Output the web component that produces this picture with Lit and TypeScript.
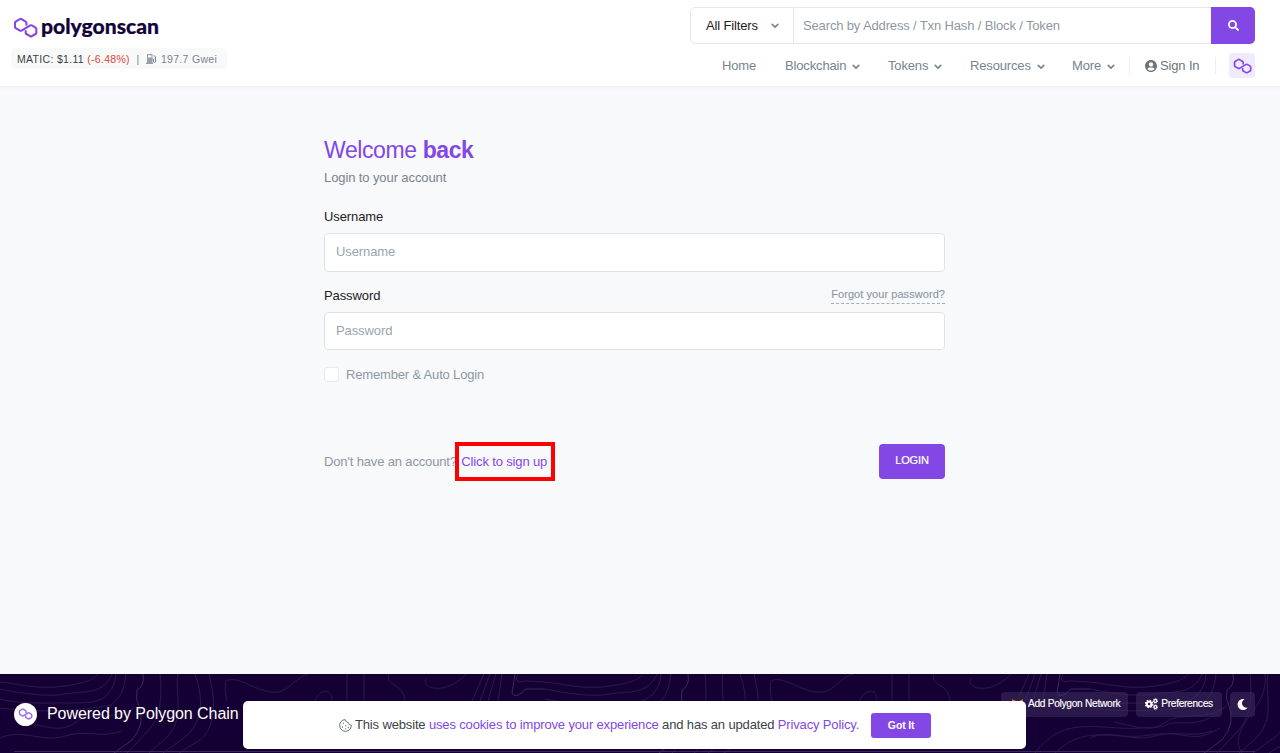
import { LitElement, html, css, svg } from "lit";
import { customElement } from "lit/decorators.js";

const chain = (cls: string, width: number) => html`
  <svg class=${cls} viewBox="13 17 25 21" fill="none" stroke="currentColor" stroke-width=${width} stroke-linejoin="round">
    <path d="M26.4 25.6V22.8Q26.4 22 25.700 21.600L21.500 19.100Q20.700 18.700 19.900 19.100L15.700 21.600Q15 22 15 22.800V27Q15 27.800 15.700 28.200L19.900 30.600Q20.700 31 21.500 30.600L30.200 25.400Q31 25 31.800 25.400L35.600 27.700Q36.300 28.100 36.300 28.900V32.900Q36.300 33.600 35.600 34L31.800 36.200Q31 36.600 30.200 36.200L26.400 34Q25.700 33.600 25.700 32.900V30.200"/>
  </svg>`;

const caret = html`<svg class="caret" viewBox="0 0 8 6" fill="none" stroke="currentColor" stroke-width="1.600" stroke-linecap="round" stroke-linejoin="round"><path d="M1.200 1.400L4 4.100L6.800 1.400"/></svg>`;

const gear = (cx: number, cy: number, r: number) => svg`
  <circle cx=${cx} cy=${cy} r=${r * 0.58} fill="none" stroke="currentColor" stroke-width=${r * 0.52}/>
  <circle cx=${cx} cy=${cy} r=${r * 0.9} fill="none" stroke="currentColor" stroke-width=${r * 0.34} stroke-dasharray=${`${r * 0.4} ${r * 0.3069}`}/>`;

@customElement("app-root")
export class AppRoot extends LitElement {
  static styles = css`
    :host { display: block; height: 753px; overflow: hidden; position: relative; background: #f8f9fb; font: 13px/20px "Liberation Sans", Arial, sans-serif; letter-spacing: -.15px; color: #77838f; }
    * { box-sizing: border-box; }
    svg { display: block; flex: none; }
    a { color: #8247e5; text-decoration: none; }
    .header { height: 87px; background: #fff; border-bottom: 1px solid #f1f2f5; box-shadow: 0 1px 2px #f0f2f6; display: flex; justify-content: space-between; padding: 7px 25px 0 11px; }
    .brand { padding: 9px 0 0 2px; height: 41px; display: flex; }
    .mark { width: 25px; height: 21px; margin-top: 1px; color: #8247e5; }
    .wordmark { width: 126px; height: 32px; margin-left: 2px; font: 900 20.5px Lato, sans-serif; letter-spacing: 0; fill: #14033a; stroke: #14033a; stroke-width: .2px; overflow: visible; }
    .price { height: 21px; width: 216px; border-radius: 4px; background: #f8fafa; padding: 0 6px; display: flex; align-items: center; font-size: 10.5px; letter-spacing: .31px; white-space: pre; color: #77838f; }
    .dark { color: #3b4046; } .red { color: #de4437; }
    .pump { width: 11px; height: 10px; margin-right: 4px; }
    .right { width: 565px; }
    .search { display: flex; height: 37px; }
    .filter { width: 104px; border: 1px solid #e4e7ee; border-radius: 5px 0 0 5px; padding: 0 14px 0 15px; display: flex; align-items: center; justify-content: space-between; color: #1e2022; }
    .filter .caret { margin: 1px 0 0; color: #77838f; }
    .query { flex: 1; border: solid #e4e7ee; border-width: 1px 0; padding: 0 9px; display: flex; align-items: center; color: #8c98a4; letter-spacing: -.145px; }
    .go { width: 44px; border-radius: 0 5px 5px 0; background: #8247e5; color: #fff; display: grid; place-items: center; }
    .go svg { width: 11px; height: 11px; }
    .nav { display: grid; grid-template-columns: 63px 103px 82px 102px 58px 85px 14px 26px; padding-left: 32px; height: 26px; margin-top: 9px; align-items: center; }
    .item { display: flex; align-items: center; gap: 6px; white-space: nowrap; }
    .caret { width: 8px; height: 6px; margin-top: 2px; }
    .sign { border: solid #eceef2; border-width: 0 1px; height: 18px; padding-left: 15px; display: flex; align-items: center; gap: 3px; color: #6c757d; margin-left: -1px; white-space: nowrap; width: 87px; }
    .sign svg { width: 12px; height: 12px; }
    .net { grid-column: 8; width: 26px; height: 25px; margin-top: -1px; background: #f0eafc; border-radius: 4px; display: grid; place-items: center; color: #8247e5; }
    .small { width: 19px; height: 16px; }
    .main { width: 621px; margin-left: 324px; height: 587px; padding-top: 49px; }
    .title { margin: 0; font-size: 23px; font-weight: 400; line-height: 28px; color: #8247e5; letter-spacing: -.4px; }
    .sub { margin: 4px 0 0; height: 20px; letter-spacing: -.1px; }
    .label { display: flex; justify-content: space-between; height: 20px; color: #1e2022; letter-spacing: -.1px; }
    .first { margin-top: 19px; margin-bottom: 6px; }
    .second { margin-top: 14px; margin-bottom: 6px; }
    .forgot { color: #8c98a4; font-size: 11px; line-height: 17px; height: 18px; border-bottom: 1px dashed #a3adb7; letter-spacing: .06px; -webkit-text-stroke: .12px; }
    .input { height: 39px; background: #fff; border: 1px solid #dfe3e9; border-radius: 4px; padding: 0 11px 2px; display: flex; align-items: center; color: #97a4af; letter-spacing: -.1px; }
    .pass { height: 38px; padding-bottom: 0; }
    .remember { display: flex; gap: 7px; align-items: center; margin-top: 15px; height: 20px; color: #8c98a4; letter-spacing: -.17px; }
    .box { width: 15px; height: 15px; margin-top: -1px; background: #fff; border: 1px solid #e7eaf3; border-radius: 3px; }
    .actions { margin-top: 59px; height: 35px; display: flex; justify-content: space-between; align-items: center; color: #8c98a4; }
    .signup { position: relative; margin-left: 1px; letter-spacing: -.15px; }
    .outline { position: absolute; left: -6px; top: -12px; width: 100px; height: 39px; border: 4px solid #f00; }
    .login { width: 66px; height: 35px; border-radius: 4px; background: #8247e5; color: #fff; display: grid; place-items: center; font-size: 11px; padding-bottom: 3px; -webkit-text-stroke: .2px; }
    .footer { height: 79px; background: #150035; color: #fff; position: relative; }
    .topo { position: absolute; inset: 0; width: 1280px; height: 79px; }
    .bar { position: relative; height: 78px; margin: 0 25px 0 14px; display: flex; border-bottom: 1px solid #392755; }
    .powered { display: flex; align-items: center; gap: 10px; font-size: 16px; height: 24px; margin-top: 28px; white-space: nowrap; letter-spacing: -.06px; }
    .disc { width: 23px; height: 23px; border-radius: 50%; background: #fff; color: #9b6df0; display: grid; place-items: center; }
    .tiny { width: 15px; height: 12px; }
    .tools { margin: 18px 0 0 auto; display: flex; gap: 8px; font-size: 10.2px; letter-spacing: -.3px; -webkit-text-stroke: .15px; }
    .tool { height: 25px; border-radius: 4px; background: rgba(64, 45, 92, .55); display: flex; align-items: center; justify-content: center; white-space: nowrap; padding-bottom: 1px; }
    .add { width: 127px; justify-content: flex-start; padding-left: 11px; gap: 5px; }
    .fox { width: 11px; height: 10px; }
    .pref { width: 86px; gap: 3px; }
    .cogs { width: 13px; height: 12px; }
    .night { width: 25px; } .night svg { width: 11px; height: 11px; }
    .cookie { position: absolute; left: 243px; top: 701px; width: 783px; height: 48px; border-radius: 5px; background: #fff; color: #3c4248; display: flex; align-items: center; padding-left: 96px; white-space: pre; letter-spacing: -.15px; }
    .biscuit { width: 13px; height: 13px; margin-right: 3px; color: #6c757d; }
    .got { margin-left: 12px; width: 60px; height: 25px; border-radius: 3px; background: #8247e5; color: #fff; font-size: 10.5px; font-weight: 700; display: grid; place-items: center; padding-bottom: 1px; }
  `;

  render() {
    return html`
      <header class="header">
        <div>
          <div class="brand">${chain("mark", 2.1)}
            <svg class="wordmark"><text x="1" y="18" textLength="118" lengthAdjust="spacingAndGlyphs">polygonscan</text></svg>
          </div>
          <div class="price"><span class="dark">MATIC: $1.11 </span><span class="red">(-6.48%)</span><span>  |  </span><svg class="pump" viewBox="0 0 11 10"><path fill="currentColor" opacity=".75" fill-rule="evenodd" d="M1 0H6.500V8.800H7V10H0V8.800H1ZM2 1.200V3.500H5.500V1.200Z"/><path d="M6.500 5H7.500V8Q8.600 9 9.500 8V3L7.800 1.200" fill="none" stroke="currentColor"/></svg><span>197.7 Gwei</span></div>
        </div>
        <div class="right">
          <div class="search">
            <div class="filter">All Filters ${caret}</div>
            <div class="query">Search by Address / Txn Hash / Block / Token</div>
            <div class="go"><svg viewBox="0 0 512 512" fill="currentColor"><path d="M505 442.700L405.300 343c-4.500-4.500-10.600-7-17-7H372c27.600-35.300 44-79.700 44-128C416 93.100 322.900 0 208 0S0 93.100 0 208s93.100 208 208 208c48.300 0 92.700-16.400 128-44v16.300c0 6.400 2.500 12.500 7 17l99.700 99.700c9.400 9.400 24.600 9.400 33.900 0l28.300-28.300c9.400-9.400 9.400-24.600.1-34zM208 336c-70.700 0-128-57.200-128-128 0-70.700 57.200-128 128-128 70.700 0 128 57.200 128 128 0 70.700-57.200 128-128 128z"/></svg></div>
          </div>
          <nav class="nav">
            <span class="item">Home</span>
            ${["Blockchain", "Tokens", "Resources", "More"].map((name) => html`<span class="item">${name}${caret}</span>`)}
            <span class="sign"><svg viewBox="0 8 496 496" fill="currentColor"><path d="M248 8C111 8 0 119 0 256s111 248 248 248 248-111 248-248S385 8 248 8zm0 96c48.600 0 88 39.400 88 88s-39.400 88-88 88-88-39.400-88-88 39.400-88 88-88zm0 344c-58.700 0-111.300-26.600-146.500-68.200 18.800-35.400 55.600-59.800 98.500-59.800 2.400 0 4.800.4 7.100 1.100 13 4.200 26.600 6.900 40.900 6.900 14.300 0 28-2.700 40.900-6.900 2.300-.7 4.700-1.100 7.100-1.100 42.900 0 79.700 24.400 98.500 59.800C359.300 421.400 306.700 448 248 448z"/></svg>Sign In</span>
            <span class="net">${chain("small", 2.2)}</span>
          </nav>
        </div>
      </header>
      <main class="main">
        <h1 class="title">Welcome <b>back</b></h1>
        <p class="sub">Login to your account</p>
        <div class="label first">Username</div>
        <div class="input">Username</div>
        <div class="label second">Password <span class="forgot">Forgot your password?</span></div>
        <div class="input pass">Password</div>
        <div class="remember"><span class="box"></span>Remember &amp; Auto Login</div>
        <div class="actions">
          <span>Don't have an account? <a class="signup">Click to sign up<span class="outline"></span></a></span>
          <span class="login">LOGIN</span>
        </div>
      </main>
      <footer class="footer">
        <svg class="topo">
          <defs>
            <pattern id="contours" width="545" height="79" patternUnits="userSpaceOnUse">
              <g fill="none" stroke="#2c194a" stroke-width="1">
                <path d="M0 15C25 20 46 23 65 20S103 21 112 0"/>
                <path d="M0 25C22 30 38 29 59 29S99 30 107 21S115 7 116 0"/>
                <path d="M0 8C20 10 38 16 65 12S94 4 98 0"/>
                <path d="M0 34C38 39 80 37 111 31Q124 23 126 0"/>
                <path d="M24 48C48 53 62 59 76 48S114 48 135 33"/>
                <path d="M0 64C22 54 42 69 65 62S97 65 122 57"/>
                <path stroke="#3a2856" d="M143 0Q145 12 137 16Q135 25 139 32Q146 49 132 66L114 79"/>
                <path d="M160 0C162 20 162 44 145 60L127 79M178 0C174 20 187 44 165 65L149 79M195 0C205 29 202 52 181 66L163 79M209 0C216 27 216 53 200 66L179 79"/>
                <path d="M227 27Q224 14 226 7C237 1 252 15 270 18S292 5 308 0M315 28C317 16 332 12 332 27M347 0V27M364 0V27M389 0C385 14 403 7 405 27M426 4C422 14 435 15 442 14S460 7 466 0"/>
                <path d="M472 27L484 0M480 27L490 0M488 27L496 0M502 0L498 27"/>
                <path stroke="#3a2856" d="M515 0L512 19Q515 26 526 15L545 15"/>
                <path d="M518 0Q512 10 526 7L545 8"/>
              </g>
            </pattern>
          </defs>
          <rect width="1280" height="79" fill="url(#contours)"/>
          <path d="M1035 79C1065 39 1100 57 1140 54S1155 55 1168 50S1205 60 1235 22M1055 79C1085 49 1113 67 1150 61S1190 72 1220 54M1242 79C1225 54 1270 34 1265 0" fill="none" stroke="#2c194a"/>
        </svg>
        <div class="bar">
          <div class="powered"><span class="disc">${chain("tiny", 2.6)}</span>Powered by Polygon Chain</div>
          <div class="tools">
            <span class="tool add"><svg class="fox" viewBox="0 0 11 10" fill="#e2761b"><path d="M0 0L4 2H7L11 0L10 7L6 10L1 7Z"/></svg>Add Polygon Network</span>
            <span class="tool pref"><svg class="cogs" viewBox="0 0 13 12">${gear(4.1, 6, 4)}${gear(10.4, 2.9, 2.5)}${gear(10.4, 9.1, 2.5)}</svg>Preferences</span>
            <span class="tool night"><svg viewBox="0 0 512 512" fill="currentColor"><path d="M283.211 512c78.962 0 151.079-35.925 198.857-94.792 7.068-8.708-.639-21.430-11.562-19.350-124.203 23.654-238.262-71.576-238.262-196.954 0-72.222 38.662-138.635 101.498-174.394 9.686-5.512 7.250-20.197-3.756-22.230A258.156 258.156 0 0 0 283.211 0c-141.309 0-256 114.511-256 256 0 141.309 114.511 256 256 256z"/></svg></span>
          </div>
        </div>
      </footer>
      <div class="cookie"><svg class="biscuit" viewBox="0 0 13 13" fill="none" stroke="currentColor" stroke-linejoin="round"><path d="M6.300 .7L4 1L1.500 3L.6 6L1.200 9L3.400 11.600L6.500 12.400L9.500 11.600L11.800 9L12.400 6.300Q10 6.500 9.500 3.700Q7 3.700 6.300 .7Z"/><path stroke-width="1.300" stroke-linecap="round" d="M4.300 4.200V4.300M3.600 8V8.100M6.600 6.600V6.700M6.700 9.800V9.900M9.300 8.400V8.500"/></svg><span>This website <a>uses cookies to improve your experience</a> and has an updated <a>Privacy Policy.</a></span><span class="got">Got It</span></div>
    `;
  }
}
